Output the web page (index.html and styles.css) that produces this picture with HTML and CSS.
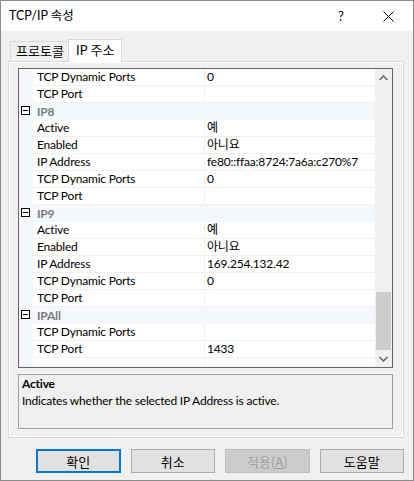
FILE: index.html
```html
<!DOCTYPE html>
<html lang="ko">
<head>
<meta charset="utf-8">
<title>TCP/IP 속성</title>
<link rel="stylesheet" href="styles.css">
</head>
<body>
<div class="window">
  <div class="titlebar">
    <span class="title">TCP/IP 속성</span>
    <span class="help">?</span>
    <span class="close">
      <svg width="11" height="11" viewBox="0 0 11 11"><path d="M0.5 0.5 L10.5 10.5 M10.5 0.5 L0.5 10.5" stroke="#000" stroke-width="1" fill="none"/></svg>
    </span>
  </div>
  <div class="client">
    <div class="tabs">
      <div class="tab">프로토콜</div>
      <div class="tab active">IP 주소</div>
    </div>
    <div class="panel">
      <div class="grid">
        <div class="rows">
          <div class="row"><span class="margin"></span><span class="name">TCP Dynamic Ports</span><span class="value">0</span></div>
          <div class="row"><span class="margin"></span><span class="name">TCP Port</span><span class="value"></span></div>
          <div class="row cat"><span class="margin"><span class="minus"></span></span><span class="catname">IP8</span></div>
          <div class="row"><span class="margin"></span><span class="name">Active</span><span class="value">예</span></div>
          <div class="row"><span class="margin"></span><span class="name">Enabled</span><span class="value">아니요</span></div>
          <div class="row"><span class="margin"></span><span class="name">IP Address</span><span class="value">fe80::ffaa:8724:7a6a:c270%7</span></div>
          <div class="row"><span class="margin"></span><span class="name">TCP Dynamic Ports</span><span class="value">0</span></div>
          <div class="row"><span class="margin"></span><span class="name">TCP Port</span><span class="value"></span></div>
          <div class="row cat"><span class="margin"><span class="minus"></span></span><span class="catname">IP9</span></div>
          <div class="row"><span class="margin"></span><span class="name">Active</span><span class="value">예</span></div>
          <div class="row"><span class="margin"></span><span class="name">Enabled</span><span class="value">아니요</span></div>
          <div class="row"><span class="margin"></span><span class="name">IP Address</span><span class="value">169.254.132.42</span></div>
          <div class="row"><span class="margin"></span><span class="name">TCP Dynamic Ports</span><span class="value">0</span></div>
          <div class="row"><span class="margin"></span><span class="name">TCP Port</span><span class="value"></span></div>
          <div class="row cat"><span class="margin"><span class="minus"></span></span><span class="catname">IPAll</span></div>
          <div class="row"><span class="margin"></span><span class="name">TCP Dynamic Ports</span><span class="value"></span></div>
          <div class="row"><span class="margin"></span><span class="name">TCP Port</span><span class="value">1433</span></div>
          <div class="row"><span class="margin"></span><span class="name"></span><span class="value"></span></div>
        </div>
        <div class="scrollbar">
          <div class="arrow">
            <svg width="9" height="6" viewBox="0 0 9 6"><path d="M0.5 5 L4.5 1 L8.5 5" stroke="#606060" stroke-width="1.4" fill="none"/></svg>
          </div>
          <div class="track"></div>
          <div class="thumb"></div>
          <div class="arrow">
            <svg width="9" height="6" viewBox="0 0 9 6"><path d="M0.5 1 L4.5 5 L8.5 1" stroke="#606060" stroke-width="1.4" fill="none"/></svg>
          </div>
        </div>
      </div>
      <div class="desc">
        <div class="desc-title">Active</div>
        <div class="desc-text">Indicates whether the selected IP Address is active.</div>
      </div>
    </div>
    <div class="buttons">
      <button class="btn default">확인</button>
      <button class="btn">취소</button>
      <button class="btn disabled">적용(<u>A</u>)</button>
      <button class="btn">도움말</button>
    </div>
  </div>
</div>
</body>
</html>
```

FILE: styles.css
```css
* { box-sizing: border-box; }
html, body { margin: 0; padding: 0; }
body {
  width: 414px;
  height: 481px;
  font-family: Lato, "Noto Sans CJK KR", sans-serif;
  font-size: 12px;
  letter-spacing: -0.2px;
  color: #000;
  background: #f0f0f0;
}
.window {
  width: 414px;
  height: 481px;
  border: 1px solid #8c8c8c;
  display: flex;
  flex-direction: column;
}
.titlebar {
  height: 30px;
  background: #fff;
  display: flex;
  align-items: center;
  padding-left: 8px;
  flex: none;
}
.title { flex: 1; font-size: 12.5px; line-height: 16px; padding-bottom: 1px; letter-spacing: 0; }
.help { width: 10px; margin-right: 35px; font-size: 13px; line-height: 16px; }
.close { width: 11px; height: 11px; margin-right: 19px; display: flex; }
.client {
  flex: 1;
  background: #f0f0f0;
  padding: 8px 9px 0 7px;
  display: flex;
  flex-direction: column;
}
.tabs {
  height: 22px;
  display: flex;
  align-items: flex-end;
  padding-left: 2px;
  position: relative;
  z-index: 1;
}
.tab {
  height: 20px;
  padding: 0 4px 0 5px;
  width: 59px;
  border: 1px solid #d9d9d9;
  border-bottom: none;
  background: #f0f0f0;
  line-height: 19px;
  font-size: 13px;
  letter-spacing: 0;
}
.tab.active {
  height: 23px;
  width: 54px;
  margin-left: -1px;
  margin-bottom: -1px;
  background: #fff;
  padding-left: 7px;
  line-height: 20px;
}
.panel {
  height: 377px;
  border: 1px solid #d9d9d9;
  box-shadow: inset 1px 1px 0 #fff, inset -1px -1px 0 #fff;
  padding: 6px 10px 0 9px;
  display: flex;
  flex-direction: column;
}
.grid {
  height: 300px;
  border: 1px solid #646464;
  display: flex;
  background: #fff;
  overflow: hidden;
}
.rows { flex: 1; display: flex; flex-direction: column; }
.row { height: 17px; display: flex; flex: none; }
.margin {
  width: 14px;
  background: #f4f7fc;
  flex: none;
  position: relative;
}
.name {
  width: 171px;
  flex: none;
  padding-left: 4px;
  line-height: 16px;
  border-bottom: 1px solid #f0f0f0;
  white-space: nowrap;
}
.value {
  flex: 1;
  border-left: 1px solid #f0f0f0;
  border-bottom: 1px solid #f0f0f0;
  padding-left: 2px;
  line-height: 16px;
  white-space: nowrap;
}
.row.cat { background: #f4f7fc; }
.catname {
  padding-left: 4px;
  line-height: 17px;
  color: #7c7c7c;
  font-weight: bold;
}
.minus {
  position: absolute;
  left: 2px;
  top: 3px;
  width: 9px;
  height: 9px;
  border: 1px solid #000;
  background: #fff;
}
.minus::after {
  content: "";
  position: absolute;
  left: 1px;
  top: 3px;
  width: 5px;
  height: 1px;
  background: #000;
}
.scrollbar {
  width: 17px;
  flex: none;
  background: #f0f0f0;
  display: flex;
  flex-direction: column;
}
.arrow {
  height: 17px;
  display: flex;
  align-items: center;
  justify-content: center;
  flex: none;
}
.track { height: 206px; flex: none; }
.thumb { flex: 1; margin: 0 1px; background: #cdcdcd; }
.desc {
  margin-top: 6px;
  height: 55px;
  border: 1px solid #a0a0a0;
  padding: 0 3px;
}
.desc-title { font-weight: bold; line-height: 17px; }
.desc-text { line-height: 17px; white-space: nowrap; }
.buttons {
  display: flex;
  gap: 10px;
  padding-left: 28px;
  margin-top: 11px;
}
.btn {
  width: 85px;
  height: 24px;
  font-family: "Noto Sans CJK KR", Lato, sans-serif;
  font-size: 13px;
  letter-spacing: 0;
  background: #e1e1e1;
  border: 1px solid #adadad;
  padding: 0;
  color: #000;
}
.btn.default { border: 2px solid #0078d7; }
.btn.disabled { background: #cccccc; border-color: #bfbfbf; color: #a0a0a0; }
```
